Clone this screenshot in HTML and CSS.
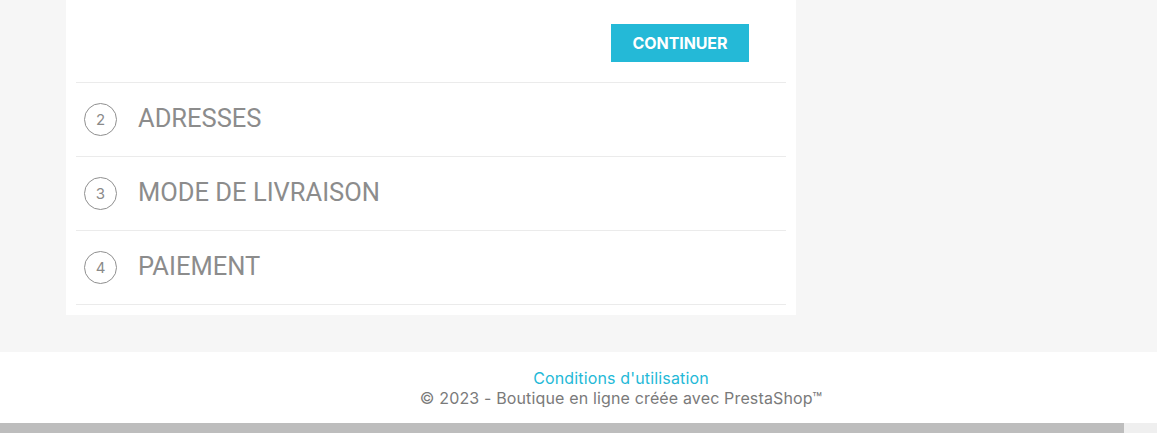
FILE: index.html
```html
<!DOCTYPE html>
<html lang="fr">
<head>
<meta charset="utf-8">
<title>Commande</title>
<link rel="stylesheet" href="styles.css">
</head>
<body>
<div class="page">
  <main class="main">
    <section class="card">
      <div class="actions">
        <button class="btn" type="button">CONTINUER</button>
      </div>
      <div class="step">
        <span class="step-num">2</span>
        <h2 class="step-title">ADRESSES</h2>
      </div>
      <div class="step">
        <span class="step-num">3</span>
        <h2 class="step-title">MODE DE LIVRAISON</h2>
      </div>
      <div class="step">
        <span class="step-num">4</span>
        <h2 class="step-title">PAIEMENT</h2>
      </div>
    </section>
  </main>
  <footer class="footer">
    <div class="footer-inner">
      <a class="footer-link" href="#">Conditions d'utilisation</a>
      <p class="copyright">© 2023 - Boutique en ligne créée avec PrestaShop™</p>
    </div>
  </footer>
  <div class="hscroll"><div class="hscroll-thumb"></div></div>
</div>
</body>
</html>
```
FILE: styles.css
```css
html, body {
  margin: 0;
  padding: 0;
  overflow: hidden;
}
body {
  background: #f6f6f6;
  font-family: Inter, "Noto Sans", sans-serif;
  width: 1157px;
  height: 433px;
}
.page {
  display: flex;
  flex-direction: column;
  height: 433px;
}
.main {
  height: 352px;
  padding-left: 66px;
  box-sizing: border-box;
}
.card {
  width: 730px;
  background: #fff;
  padding: 24px 10px 10px;
  box-sizing: border-box;
}
.actions {
  display: flex;
  justify-content: flex-end;
  padding-right: 37px;
  padding-bottom: 20px;
  border-bottom: 1px solid #ebebeb;
}
.btn {
  width: 138px;
  height: 38px;
  border: 0;
  background: #24b9d7;
  color: #fff;
  font-family: Inter, "Noto Sans", sans-serif;
  font-weight: 700;
  font-size: 16px;
  letter-spacing: -0.1px;
  padding: 0;
  cursor: pointer;
}
.step {
  display: flex;
  align-items: center;
  height: 73px;
  border-bottom: 1px solid #ebebeb;
  padding-left: 8px;
}
.step-num {
  width: 33px;
  height: 33px;
  border: 1px solid #8f8f8f;
  border-radius: 50%;
  box-sizing: border-box;
  display: flex;
  align-items: center;
  justify-content: center;
  font-size: 15px;
  color: #8a8a8a;
  margin-right: 21px;
}
.step-title {
  margin: 0 0 3px;
  font-family: Roboto, sans-serif;
  font-weight: 400;
  font-size: 25.5px;
  line-height: 30px;
  color: #8c8c8c;
}
.footer {
  height: 71px;
  background: #fff;
  overflow: hidden;
}
.footer-inner {
  width: 1242px;
  padding-top: 16px;
  display: flex;
  flex-direction: column;
  align-items: center;
  font-size: 16px;
  letter-spacing: 0.15px;
  line-height: 20px;
}
.footer-link {
  color: #24b9d7;
  text-decoration: none;
}
.copyright {
  margin: 0;
  color: #7a7a7a;
}
.hscroll {
  height: 10px;
  background: #efefef;
}
.hscroll-thumb {
  width: 1124px;
  height: 10px;
  background: #bdbdbd;
}
```
